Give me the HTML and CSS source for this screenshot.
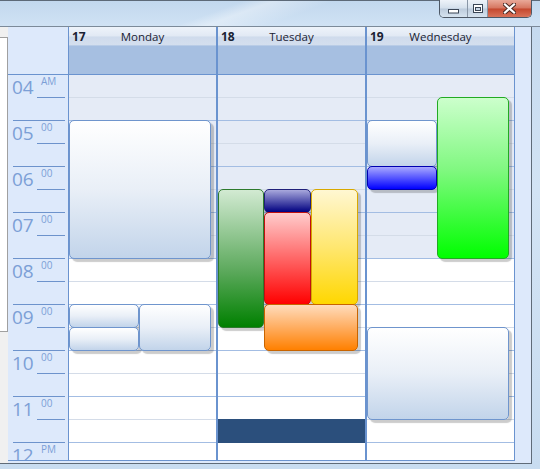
FILE: index.html
```html
<!DOCTYPE html>
<html lang="en">
<head>
    <meta charset="UTF-8">
    <title>Calendar - Day View</title>
    <link rel="stylesheet" href="styles.css">
</head>
<body>
    <div class="window">
        <div class="titlebar">
            <div class="caption-buttons">
                <div class="cap cap-min">
                    <svg width="12" height="5" viewBox="0 0 12 5"><rect x="0.5" y="0.5" width="10" height="3.5" fill="#fff" stroke="#3a4656"/></svg>
                </div>
                <div class="cap cap-max">
                    <svg width="10" height="9" viewBox="0 0 10 9"><rect x="0.5" y="0.5" width="9" height="8" fill="#fff" stroke="#3a4656"/><rect x="2.5" y="3.5" width="5" height="3" fill="#c8d6e6" stroke="#3a4656"/></svg>
                </div>
                <div class="cap cap-close">
                    <svg width="13" height="11" viewBox="0 0 13 11"><path d="M2 1.5 L11 9.5 M11 1.5 L2 9.5" stroke="#4a2a24" stroke-width="4.2" stroke-linecap="square"/><path d="M2 1.5 L11 9.5 M11 1.5 L2 9.5" stroke="#fff" stroke-width="2.2" stroke-linecap="square"/></svg>
                </div>
            </div>
        </div>

        <div class="client">
            <div class="side"><div class="side-panel"></div></div>

            <div class="calendar">
                <!-- time ruler -->
                <div class="ruler">
                    <div class="ruler-head"></div>
                    <div class="ruler-body">
                        <div class="hour"><span class="hour-num">04</span><span class="hour-min">AM</span></div>
                        <div class="hour"><span class="hour-num">05</span><span class="hour-min">00</span></div>
                        <div class="hour"><span class="hour-num">06</span><span class="hour-min">00</span></div>
                        <div class="hour"><span class="hour-num">07</span><span class="hour-min">00</span></div>
                        <div class="hour"><span class="hour-num">08</span><span class="hour-min">00</span></div>
                        <div class="hour"><span class="hour-num">09</span><span class="hour-min">00</span></div>
                        <div class="hour"><span class="hour-num">10</span><span class="hour-min">00</span></div>
                        <div class="hour"><span class="hour-num">11</span><span class="hour-min">00</span></div>
                        <div class="hour"><span class="hour-num">12</span><span class="hour-min">PM</span></div>
                    </div>
                </div>

                <!-- Monday -->
                <div class="day">
                    <div class="day-head"><b>17</b><span>Monday</span></div>
                    <div class="allday"></div>
                    <div class="day-body cols-2">
                        <div class="appt" style="grid-row: 3 / 9; grid-column: 1 / 3;"></div>
                        <div class="appt" style="grid-row: 11 / 12; grid-column: 1;"></div>
                        <div class="appt" style="grid-row: 12 / 13; grid-column: 1;"></div>
                        <div class="appt" style="grid-row: 11 / 13; grid-column: 2;"></div>
                    </div>
                </div>

                <!-- Tuesday -->
                <div class="day">
                    <div class="day-head"><b>18</b><span>Tuesday</span></div>
                    <div class="allday"></div>
                    <div class="day-body cols-3">
                        <div class="selection" style="grid-row: 16 / 17;"></div>
                        <div class="appt green" style="grid-row: 6 / 12; grid-column: 1;"></div>
                        <div class="appt navy" style="grid-row: 6 / 7; grid-column: 2;"></div>
                        <div class="appt red" style="grid-row: 7 / 11; grid-column: 2;"></div>
                        <div class="appt yellow" style="grid-row: 6 / 11; grid-column: 3;"></div>
                        <div class="appt orange" style="grid-row: 11 / 13; grid-column: 2 / 4;"></div>
                    </div>
                </div>

                <!-- Wednesday -->
                <div class="day day-last">
                    <div class="day-head"><b>19</b><span>Wednesday</span></div>
                    <div class="allday"></div>
                    <div class="day-body cols-2">
                        <div class="appt" style="grid-row: 3 / 5; grid-column: 1;"></div>
                        <div class="appt blue" style="grid-row: 5 / 6; grid-column: 1;"></div>
                        <div class="appt lime" style="grid-row: 2 / 9; grid-column: 2;"></div>
                        <div class="appt" style="grid-row: 12 / 16; grid-column: 1 / 3;"></div>
                    </div>
                </div>

                <div class="scroll-strip"></div>
            </div>
        </div>
    </div>
</body>
</html>
```

FILE: styles.css
```css
body {
    margin: 0;
    font-family: "Open Sans", "Noto Sans", sans-serif;
}
.window {
    width: 540px;
    height: 469px;
    overflow: hidden;
    background: linear-gradient(180deg, #c3d8ee 0%, #d2e3f4 40%, #c8dcf0 100%);
}

/* glass title bar */
.titlebar {
    height: 25px;
    border-top: 1px solid #5d6a78;
    border-bottom: 1px solid #7c8a99;
    display: flex;
    justify-content: flex-end;
    padding-right: 8px;
    background:
        linear-gradient(160deg, transparent 0 40%, rgba(255,255,255,0.35) 45%, transparent 55%),
        linear-gradient(180deg, #c2d8ee, #d0e2f4);
}
.caption-buttons {
    display: flex;
    height: 17px;
    margin-top: -1px;
    border: 1px solid #4d5866;
    border-top: none;
    border-radius: 0 0 5px 5px;
    overflow: hidden;
}
.cap {
    display: flex;
    align-items: center;
    justify-content: center;
    background: linear-gradient(180deg, #eef3f9 0%, #d4e0ec 48%, #bccbdc 52%, #d6e3ef 100%);
}
.cap-min {
    width: 28px;
    border-right: 1px solid #8896a6;
    align-items: flex-end;
    padding-bottom: 3px;
    box-sizing: border-box;
}
.cap-max {
    width: 19px;
    border-right: 1px solid #8896a6;
}
.cap-close {
    width: 43px;
    background: linear-gradient(180deg, #e9a999 0%, #d6755f 48%, #c4472e 52%, #d9735a 100%);
}

/* client area */
.client {
    display: flex;
    width: 531px;
    height: 436px;
    border-right: 1px solid #5f6b78;
    border-bottom: 1px solid #5f6b78;
    background: #f0f0f0;
}
.side {
    width: 8px;
}
.side-panel {
    width: 7px;
    height: 293px;
    margin-top: 10px;
    background: #fff;
    border-top: 1px solid #a0a0a0;
    border-right: 1px solid #a0a0a0;
    border-bottom: 1px solid #a0a0a0;
}
.calendar {
    display: flex;
    width: 523px;
    padding-bottom: 2px;
    background: #dde9fb;
}

/* time ruler */
.ruler {
    width: 60px;
    border-right: 1px solid #6a93cf;
    display: flex;
    flex-direction: column;
}
.ruler-head {
    height: 47px;
    border-bottom: 1px solid #6a93cf;
}
.ruler-body {
    height: 385px;
    border-bottom: 1px solid #6a93cf;
    overflow: hidden;
}
.hour {
    height: 46px;
    box-sizing: border-box;
    margin: 0 3px 0 5px;
    border-bottom: 1px solid #6d93cc;
    display: flex;
    color: #7c9fd6;
}
.hour-num {
    width: 25px;
    margin-left: -1px;
    padding-top: 3px;
    font-size: 19px;
    line-height: 1;
}
.hour-min {
    flex: 1;
    height: 23px;
    box-sizing: border-box;
    padding: 1px 0 0 4px;
    border-bottom: 1px solid #6d93cc;
    font-size: 10px;
    line-height: 1;
}

/* day columns */
.day {
    width: 147px;
    border-right: 2px solid #6a93cf;
    display: flex;
    flex-direction: column;
}
.day-last {
    border-right-width: 1px;
}
.day-head {
    height: 18px;
    display: grid;
    grid-template-columns: 1fr auto 1fr;
    align-items: center;
    font-size: 11.5px;
    color: #1a2233;
    background: linear-gradient(180deg, #eef3fa 0%, #e1e9f4 50%, #cfdbec 55%, #d4dfee 100%);
}
.day-head b {
    padding-left: 3px;
    font-size: 12px;
}
.allday {
    height: 29px;
    background: #a6bfe1;
    border-bottom: 1px solid #6a93cf;
    border-top: 1px solid #b9cce6;
    box-sizing: border-box;
    height: 30px;
}
.day-body {
    height: 385px;
    border-bottom: 1px solid #6a93cf;
    overflow: hidden;
    display: grid;
    grid-template-rows: repeat(17, 23px);
    align-content: start;
    background:
        linear-gradient(180deg, transparent 0 22px, #d4dce8 22px 23px, transparent 23px 45px, #a3bde3 45px 46px) 0 0 / 100% 46px repeat-y,
        linear-gradient(180deg, #e5ebf6 0 184px, #fff 184px);
}
.cols-2 {
    grid-template-columns: 70px 72px;
    padding-right: 5px;
}
.cols-3 {
    grid-template-columns: 46px 47px 47px;
    padding-right: 7px;
}

/* appointments */
.appt {
    margin-top: -1px;
    border: 1px solid #6f95cd;
    border-radius: 5px;
    box-shadow: 3px 3px 1px rgba(0, 0, 0, 0.2);
    background: linear-gradient(180deg, #ffffff 0%, #e9eff7 50%, #c2d4ea 100%);
}
.appt.green {
    border-color: #2d7a2d;
    background: linear-gradient(180deg, #d2ead2 0%, #5aa85a 60%, #008000 100%);
}
.appt.navy {
    border-color: #20207a;
    background: linear-gradient(180deg, #a8a8dc 0%, #000080 100%);
}
.appt.red {
    border-color: #c01010;
    background: linear-gradient(180deg, #ffcccc 0%, #ff0000 100%);
}
.appt.yellow {
    border-color: #d8a800;
    background: linear-gradient(180deg, #fff7d2 0%, #ffe770 50%, #ffd700 100%);
}
.appt.orange {
    border-color: #c86400;
    background: linear-gradient(180deg, #ffdcbc 0%, #ffad60 50%, #ff8000 100%);
}
.appt.blue {
    border-color: #0000b0;
    background: linear-gradient(180deg, #a8a8ff 0%, #0000ff 100%);
}
.appt.lime {
    border-color: #22aa22;
    background: linear-gradient(180deg, #ccffcc 0%, #80f880 45%, #00ff00 100%);
}
.selection {
    grid-column: 1 / -1;
    margin: -1px -7px 0 0;
    background: #2b4f7c;
}

.scroll-strip {
    width: 16px;
}
```
